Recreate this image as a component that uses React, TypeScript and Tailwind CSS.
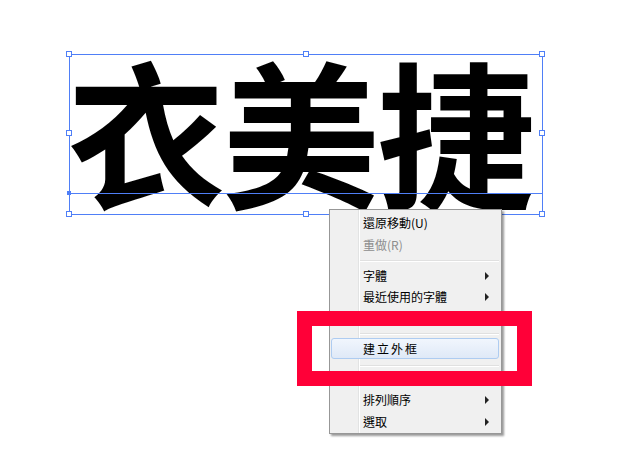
import React from "react";

const cjk = { fontFamily: '"Noto Sans CJK TC", "Noto Sans CJK SC", sans-serif' };

function Handle({ x, y, filled }: { x: number; y: number; filled?: boolean }) {
  // handles sit on a free canvas, so their coordinates are the content
  return (
    <div
      className={`absolute w-[6px] h-[6px] border border-[#4f7ff7] ${filled ? "bg-[#4f7ff7]" : "bg-white"}`}
      style={{ left: x - 3, top: y - 3 }}
    />
  );
}

type Row =
  | { kind: "item"; label: string; h: string; disabled?: boolean; sub?: boolean; hot?: boolean }
  | { kind: "sep"; h: string; pt: string }
  | { kind: "gap"; h: string };

const rows: Row[] = [
  { kind: "gap", h: "h-[2px]" },
  { kind: "item", label: "還原移動(U)", h: "h-[22px]" },
  { kind: "item", label: "重做(R)", h: "h-[21px]", disabled: true },
  { kind: "sep", h: "h-[10px]", pt: "pt-[5px]" },
  { kind: "item", label: "字體", h: "h-[21px]", sub: true },
  { kind: "item", label: "最近使用的字體", h: "h-[22px]", sub: true },
  { kind: "sep", h: "h-[8px]", pt: "pt-[3px]" },
  { kind: "gap", h: "h-[14px]" },
  { kind: "sep", h: "h-[6px]", pt: "pt-[3px]" },
  { kind: "item", label: "建立外框", h: "h-[25px]", hot: true },
  { kind: "sep", h: "h-[8px]", pt: "pt-[4px]" },
  { kind: "sep", h: "h-[12px]", pt: "pt-[6px]" },
  { kind: "gap", h: "h-[8px]" },
  { kind: "item", label: "排列順序", h: "h-[22px]", sub: true },
  { kind: "item", label: "選取", h: "h-[22px]", sub: true },
];

function ContextMenu() {
  return (
    <div
      className="absolute left-[329px] top-[209px] w-[173px] bg-[#f0f0f0] border border-[#979797] shadow-[2px_2px_2px_rgba(0,0,0,0.4)] text-[12px]"
      style={cjk}
    >
      {/* icon gutter */}
      <div className="absolute left-[28px] top-0 bottom-0 w-[2px] border-l border-[#e2e3e3] bg-white" />
      <div className="relative flex flex-col">
        {rows.map((r, i) => {
          if (r.kind === "gap") return <div key={i} className={r.h} />;
          if (r.kind === "sep")
            return (
              <div key={i} className={`${r.h} ${r.pt} pl-[30px] pr-[2px]`}>
                <div className="h-px bg-[#e0e0e0]" />
                <div className="h-px bg-white" />
              </div>
            );
          return (
            <div key={i} className={`${r.h} relative flex items-center`}>
              {r.hot && (
                <div className="absolute left-[1px] right-[2px] top-[2px] bottom-[2px] rounded-[3px] border border-[#aeccf1] bg-gradient-to-b from-[#f1f6fd] to-[#dfe9f7]" />
              )}
              <span
                className={`relative pl-[33px] leading-[14px] ${r.disabled ? "text-[#8d8d8d]" : "text-black"} ${r.hot ? "tracking-[2px]" : ""}`}
              >
                {r.label}
              </span>
              {r.sub && (
                <span className="absolute right-[12px] top-1/2 -translate-y-1/2 w-0 h-0 border-y-[4px] border-y-transparent border-l-[4px] border-l-[#222]" />
              )}
            </div>
          );
        })}
      </div>
    </div>
  );
}

export default function App() {
  return (
    <div className="relative w-[617px] h-[470px] bg-white overflow-hidden">
      {/* text object */}
      <div
        className="absolute left-[67px] top-[50px] text-[158px] leading-none tracking-[-3px] font-bold text-black whitespace-nowrap"
        style={cjk}
      >
        衣美捷
      </div>

      {/* selection box */}
      <div className="absolute left-[69px] top-[54px] w-[474px] h-[161px] border border-[#4f7ff7]" />
      <div className="absolute left-[69px] top-[193px] w-[474px] h-px bg-[#4f7ff7]" />
      <Handle x={69} y={54} />
      <Handle x={306} y={54} />
      <Handle x={542} y={54} />
      <Handle x={69} y={133} />
      <Handle x={542} y={133} />
      <Handle x={69} y={214} />
      <Handle x={306} y={214} />
      <Handle x={542} y={214} />
      <div className="absolute left-[67px] top-[191px] w-[4px] h-[4px] bg-[#4f7ff7]" />

      <ContextMenu />

      {/* red annotation */}
      <div className="absolute left-[297px] top-[311px] w-[235px] h-[75px] border-[15px] border-[#ff0038]" />
    </div>
  );
}
